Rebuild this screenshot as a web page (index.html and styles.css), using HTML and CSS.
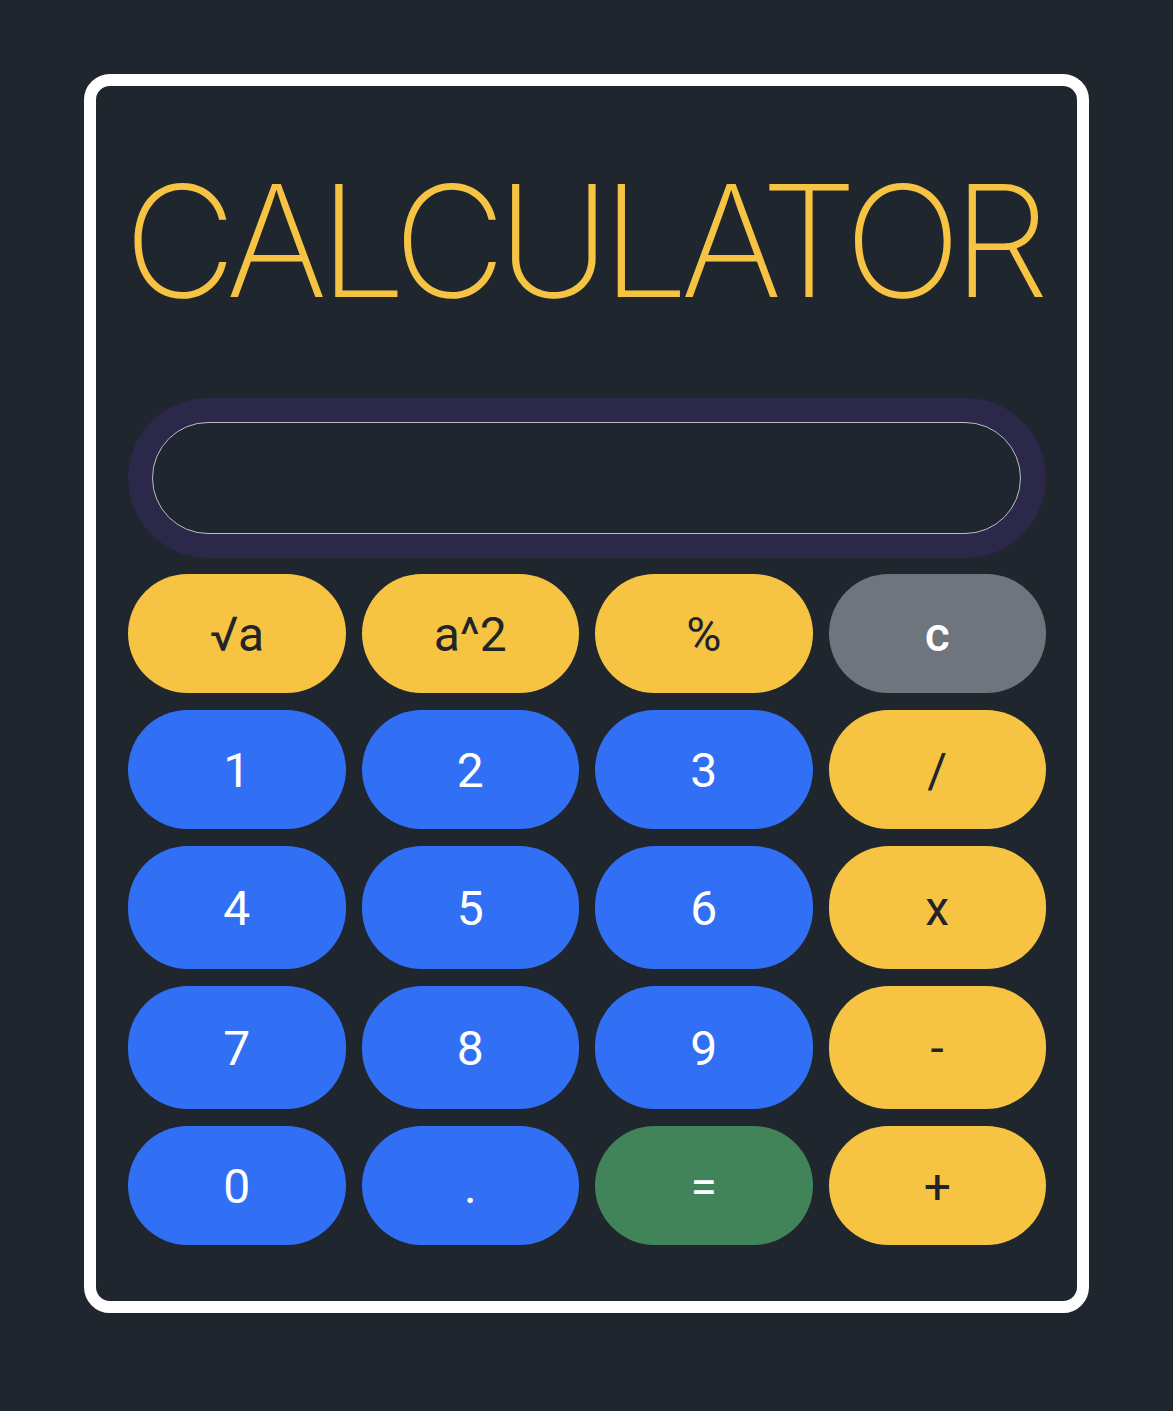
FILE: index.html
```
<!DOCTYPE html>
<html lang="en">
<head>
<meta charset="utf-8">
<title>Calculator</title>
<link rel="stylesheet" href="styles.css">
</head>
<body>
<div class="card">
  <h1 class="title">CALCULATOR</h1>
  <div class="display-ring">
    <input class="display" type="text" aria-label="display">
  </div>
  <div class="keys">
    <button class="key key-yellow">√a</button>
    <button class="key key-yellow">a^2</button>
    <button class="key key-yellow">%</button>
    <button class="key key-gray">c</button>
    <button class="key key-blue">1</button>
    <button class="key key-blue">2</button>
    <button class="key key-blue">3</button>
    <button class="key key-yellow">/</button>
    <button class="key key-blue">4</button>
    <button class="key key-blue">5</button>
    <button class="key key-blue">6</button>
    <button class="key key-yellow">x</button>
    <button class="key key-blue">7</button>
    <button class="key key-blue">8</button>
    <button class="key key-blue">9</button>
    <button class="key key-yellow">-</button>
    <button class="key key-blue">0</button>
    <button class="key key-blue">.</button>
    <button class="key key-green">=</button>
    <button class="key key-yellow">+</button>
  </div>
</div>
</body>
</html>
```
FILE: styles.css
```
* { box-sizing: border-box; }
html, body { margin: 0; background: #1f262e; }
body {
  padding: 74px 84px 98px;
  font-family: Roboto, "Noto Sans", sans-serif;
}
.card {
  width: 1005px;
  height: 1239px;
  border: 12px solid #ffffff;
  border-radius: 26px;
  background: #1f262e;
  padding: 0 31px 0 32px;
  display: flex;
  flex-direction: column;
}
.title {
  margin: 76px 0 0 -4px;
  height: 236px;
  font-family: Inter, "Open Sans", sans-serif;
  font-weight: 200;
  font-size: 155px;
  line-height: 158px;
  letter-spacing: -8.5px;
  color: #f6c343;
  white-space: nowrap;
}
.display-ring {
  background: #2b2849;
  border-radius: 80px;
  padding: 24px 25px 24px 24px;
}
.display {
  display: block;
  width: 100%;
  height: 112px;
  border: 1.5px solid #b9bec5;
  border-radius: 56px;
  background: #1f262e;
  outline: none;
  color: #ffffff;
  font-size: 40px;
  padding: 0 40px;
}
.keys {
  margin-top: 16px;
  display: grid;
  grid-template-columns: repeat(4, 1fr);
  grid-template-rows: 119px 119px 123px 123px 119px;
  column-gap: 16px;
  row-gap: 17px;
}
.key {
  border: none;
  border-radius: 60px;
  font-family: Roboto, "Noto Sans", sans-serif;
  font-size: 48px;
  font-weight: 400;
  padding: 2px 0 0 0;
  display: flex;
  align-items: center;
  justify-content: center;
}
.key-yellow { background: #f6c343; color: #212529; }
.key-blue { background: #316ff4; color: #ffffff; }
.key-green { background: #42845a; color: #ffffff; }
.key-gray { background: #6e757c; color: #ffffff; font-weight: 500; }
```
